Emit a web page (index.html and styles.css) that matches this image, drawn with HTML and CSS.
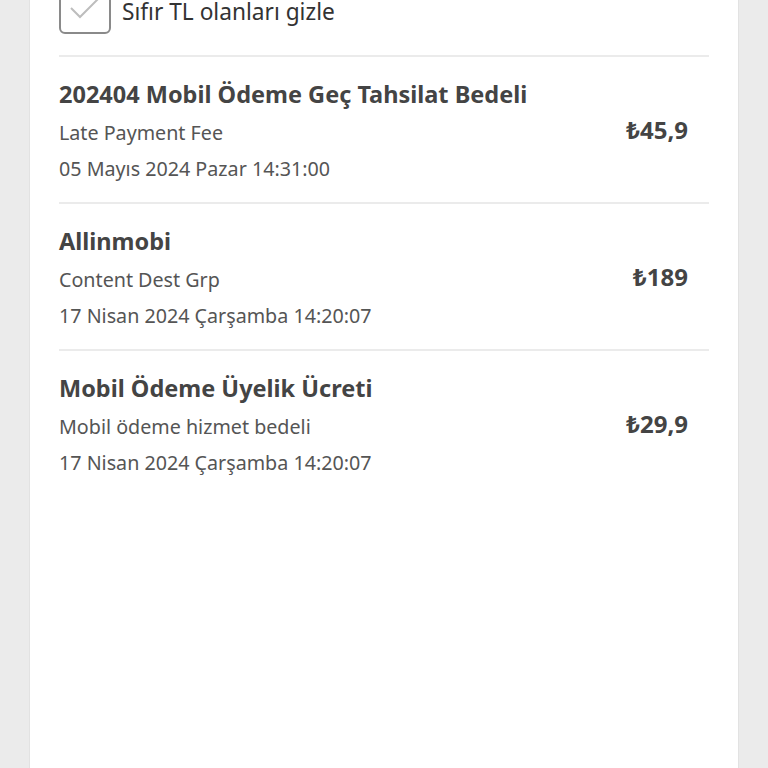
FILE: index.html
```html
<!DOCTYPE html>
<html lang="tr">
  <head>
    <meta charset="UTF-8" />
    <meta name="viewport" content="width=device-width, initial-scale=1.0" />
    <title>Harcamalar</title>
    <link rel="stylesheet" href="styles.css">
  </head>
  <body>
    <div class="panel">
      <!-- Filter -->
      <label class="filter">
        <span class="check">
          <svg width="34" height="24" viewBox="0 0 34 24">
            <path d="M3 12 L12 21 L31 2" fill="none" stroke="#bdbdbd" stroke-width="2" />
          </svg>
        </span>
        <span class="filter-text">Sıfır TL olanları gizle</span>
      </label>

      <!-- Items -->
      <div class="list">
        <div class="item">
          <div class="info">
            <div class="title">202404 Mobil Ödeme Geç Tahsilat Bedeli</div>
            <div class="sub">Late Payment Fee</div>
            <div class="date">05 Mayıs 2024 Pazar 14:31:00</div>
          </div>
          <div class="price">₺45,9</div>
        </div>
        <div class="item">
          <div class="info">
            <div class="title">Allinmobi</div>
            <div class="sub">Content Dest Grp</div>
            <div class="date">17 Nisan 2024 Çarşamba 14:20:07</div>
          </div>
          <div class="price">₺189</div>
        </div>
        <div class="item last">
          <div class="info">
            <div class="title">Mobil Ödeme Üyelik Ücreti</div>
            <div class="sub">Mobil ödeme hizmet bedeli</div>
            <div class="date">17 Nisan 2024 Çarşamba 14:20:07</div>
          </div>
          <div class="price">₺29,9</div>
        </div>
      </div>
    </div>
  </body>
</html>
```

FILE: styles.css
```css
body {
  margin: 0;
  background-color: #ebebeb;
  font-family: "Noto Sans", "DejaVu Sans", sans-serif;
  color: #4a4a4a;
  overflow: hidden;
}

.panel {
  background-color: white;
  margin: 0 29px;
  min-height: 820px;
  padding: 0 29px;
  border-left: 1px solid #e2e2e2;
  border-right: 1px solid #e2e2e2;
}

.filter {
  display: flex;
  align-items: flex-start;
  gap: 11px;
  height: 78px;
  margin-top: -21px;
  padding-top: 3px;
  border-bottom: 2px solid #ebebeb;
  box-sizing: border-box;
}

.check {
  width: 48px;
  height: 48px;
  border: 2px solid #8a8a8a;
  border-radius: 6px;
  display: flex;
  align-items: center;
  justify-content: center;
}

.filter-text {
  font-size: 22.7px;
  color: #333;
  margin-top: 14px;
}

.item {
  display: flex;
  align-items: center;
  justify-content: space-between;
  height: 145px;
  border-bottom: 2px solid #ebebeb;
  padding-right: 21px;
}

.item.last {
  border-bottom: none;
}

.info {
  display: flex;
  flex-direction: column;
  gap: 9px;
}

.title {
  font-size: 23.5px;
  font-weight: bold;
  color: #444;
}

.sub,
.date {
  font-size: 19.7px;
  color: #555;
}

.price {
  font-size: 24px;
  font-weight: bold;
  color: #444;
}
```
